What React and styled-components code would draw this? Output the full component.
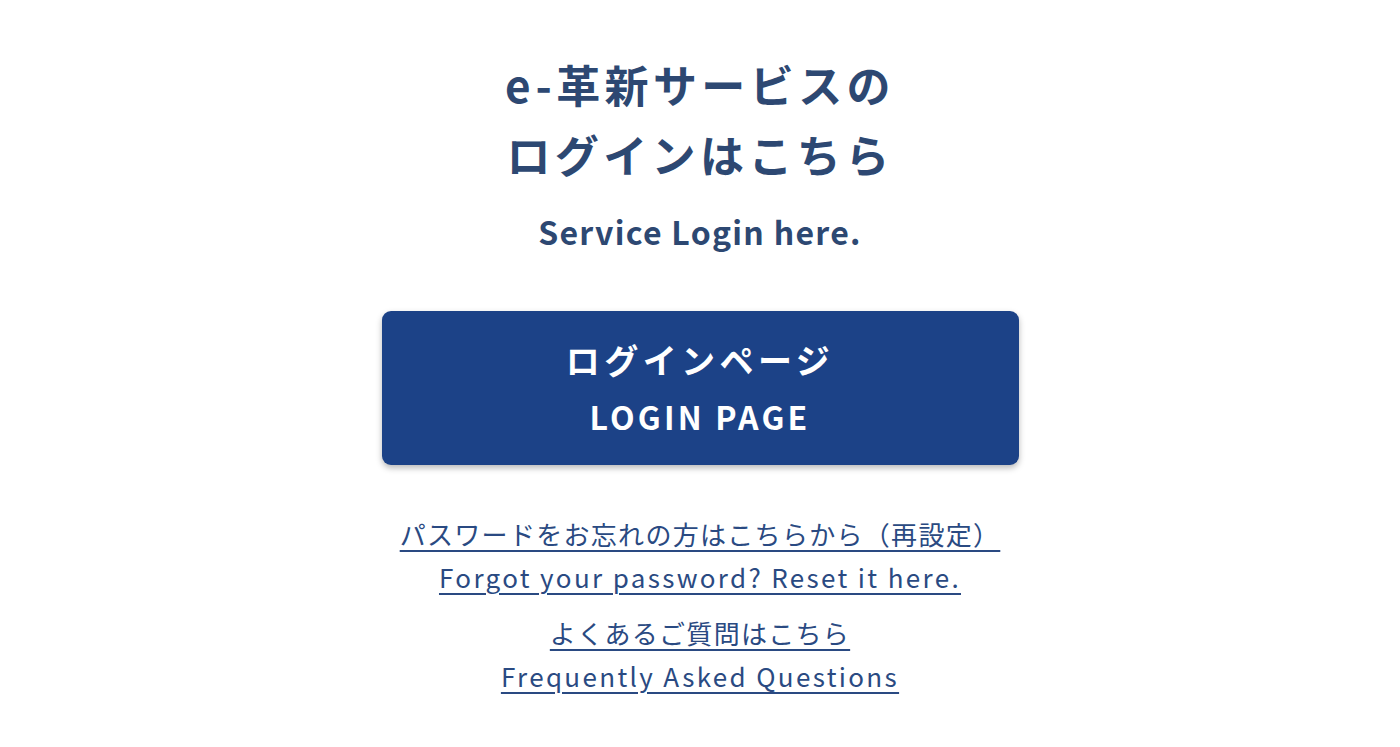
import React from 'react';
import styled, { createGlobalStyle } from 'styled-components';

const GlobalStyle = createGlobalStyle`
  html, body {
    margin: 0;
    padding: 0;
    background: #ffffff;
  }
  body {
    font-family: "Noto Sans CJK JP", "Noto Sans", sans-serif;
  }
`;

function App() {
  return (
    <>
      <GlobalStyle />
      <LoginSectionStyled>
        <h1 className="title">
          e-革新サービスの<br />ログインはこちら
        </h1>
        <p className="sub">Service Login here.</p>
        <a className="login-btn" href="#login">
          <span className="jp">ログインページ</span>
          <span className="en">LOGIN PAGE</span>
        </a>
        <div className="links">
          <a href="#reset">
            <span className="jp">パスワードをお忘れの方はこちらから（再設定）</span><br />
            <span className="en">Forgot your password? Reset it here.</span>
          </a>
          <a href="#faq">
            <span className="jp">よくあるご質問はこちら</span><br />
            <span className="en">Frequently Asked Questions</span>
          </a>
        </div>
      </LoginSectionStyled>
    </>
  );
}

const LoginSectionStyled = styled.section`
  display: flex;
  flex-direction: column;
  align-items: center;
  padding-top: 49px;
  color: #2d4872;
  .title {
    margin: 0;
    font-size: 44px;
    line-height: 70px;
    font-weight: 700;
    letter-spacing: 0.1em;
    text-align: center;
  }
  .sub {
    margin: 22px 0 0;
    font-size: 32px;
    line-height: 40px;
    font-weight: 700;
    letter-spacing: 0.04em;
  }
  .login-btn {
    margin-top: 60px;
    width: 637px;
    height: 154px;
    box-sizing: border-box;
    display: flex;
    flex-direction: column;
    align-items: center;
    justify-content: center;
    gap: 4px;
    background-color: #1c4287;
    border-radius: 9px;
    box-shadow: 0 3px 6px rgba(0, 0, 0, 0.28);
    color: #ffffff;
    text-decoration: none;
    font-weight: 700;
    .jp {
      font-size: 34px;
      line-height: 52px;
      letter-spacing: 0.13em;
    }
    .en {
      font-size: 32px;
      line-height: 52px;
      letter-spacing: 0.1em;
    }
  }
  .links {
    margin-top: 47px;
    display: flex;
    flex-direction: column;
    align-items: center;
    gap: 13px;
    a {
      color: #2a4a82;
      font-size: 26px;
      line-height: 43px;
      text-align: center;
      text-decoration: underline;
      text-underline-offset: 5px;
      text-decoration-thickness: 1.5px;
    }
    .jp {
      letter-spacing: 0.05em;
    }
    .en {
      letter-spacing: 0.09em;
    }
  }
`;

export default App;
